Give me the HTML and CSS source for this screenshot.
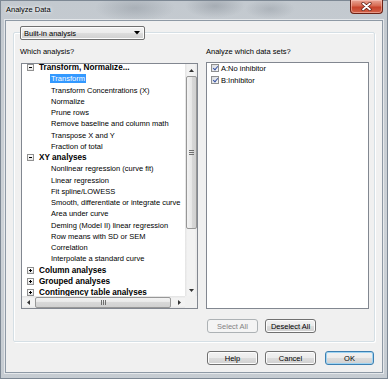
FILE: index.html
```html
<!DOCTYPE html>
<html lang="en">
<head>
  <meta charset="UTF-8">
  <title>Analyze Data</title>
  <link rel="stylesheet" href="styles.css">
</head>
<body>

  <div class="window">
    <div class="titlebar">
      <div class="title">Analyze Data</div>
      <div class="close">
        <svg width="11" height="9" viewBox="0 0 11 9">
          <path d="M2 1.5 L9 7.5 M9 1.5 L2 7.5" stroke="#5a1a10" stroke-width="3.2" stroke-linecap="round"/>
          <path d="M2 1.5 L9 7.5 M9 1.5 L2 7.5" stroke="#fff" stroke-width="1.8" stroke-linecap="round"/>
        </svg>
      </div>
    </div>

    <div class="client">
      <div class="combo">
        <span>Built-in analysis</span>
        <svg width="6" height="4" viewBox="0 0 6 4"><path d="M0 0 H6 L3 3.5 Z" fill="#000"/></svg>
      </div>

      <div class="group">
        <div class="label first">Which analysis?</div>
        <div class="label">Analyze which data sets?</div>

        <div class="tree">
          <div class="tree-rows">
            <div class="node"><span class="exp minus"></span>Transform, Normalize...</div>
            <div class="leaf"><span class="selected">Transform</span></div>
            <div class="leaf">Transform Concentrations (X)</div>
            <div class="leaf">Normalize</div>
            <div class="leaf">Prune rows</div>
            <div class="leaf">Remove baseline and column math</div>
            <div class="leaf">Transpose X and Y</div>
            <div class="leaf">Fraction of total</div>
            <div class="node"><span class="exp minus"></span>XY analyses</div>
            <div class="leaf">Nonlinear regression (curve fit)</div>
            <div class="leaf">Linear regression</div>
            <div class="leaf">Fit spline/LOWESS</div>
            <div class="leaf">Smooth, differentiate or integrate curve</div>
            <div class="leaf">Area under curve</div>
            <div class="leaf">Deming (Model II) linear regression</div>
            <div class="leaf">Row means with SD or SEM</div>
            <div class="leaf">Correlation</div>
            <div class="leaf">Interpolate a standard curve</div>
            <div class="node"><span class="exp plus"></span>Column analyses</div>
            <div class="node"><span class="exp plus"></span>Grouped analyses</div>
            <div class="node"><span class="exp plus"></span>Contingency table analyses</div>
          </div>

          <div class="vbar">
            <div class="arrow"><svg width="5" height="3" viewBox="0 0 5 3"><path d="M0 3 H5 L2.5 0 Z" fill="#333"/></svg></div>
            <div class="track">
              <div class="vthumb"><span class="grip-h"></span></div>
            </div>
            <div class="arrow"><svg width="5" height="3" viewBox="0 0 5 3"><path d="M0 0 H5 L2.5 3 Z" fill="#333"/></svg></div>
          </div>

          <div class="hbar">
            <div class="arrow"><svg width="3" height="5" viewBox="0 0 3 5"><path d="M3 0 V5 L0 2.5 Z" fill="#333"/></svg></div>
            <div class="track">
              <div class="hthumb"><span class="grip-v"></span></div>
            </div>
            <div class="arrow"><svg width="3" height="5" viewBox="0 0 3 5"><path d="M0 0 V5 L3 2.5 Z" fill="#333"/></svg></div>
          </div>

          <div class="corner"></div>
        </div>

        <div class="checks-box">
          <div class="checks">
            <div class="check"><span class="box"></span>A:No inhibitor</div>
            <div class="check"><span class="box"></span>B:Inhibitor</div>
          </div>
        </div>

        <div class="select-row">
          <button class="btn disabled">Select All</button>
          <button class="btn">Deselect All</button>
        </div>
      </div>

      <div class="footer">
        <button class="btn">Help</button>
        <button class="btn">Cancel</button>
        <button class="btn default">OK</button>
      </div>
    </div>
  </div>

</body>
</html>
```

FILE: styles.css
```css
* {
  box-sizing: border-box;
}

body {
  margin: 0;
  font-family: "Liberation Sans", Arial, sans-serif;
  font-size: 7.5px;
  color: #000;
  overflow: hidden;
}

/* ===== window frame ===== */
.window {
  width: 388px;
  height: 379px;
  display: flex;
  flex-direction: column;
  background:
    radial-gradient(ellipse 40px 14px at 135px 8px, rgba(120, 128, 138, 0.35), transparent),
    radial-gradient(ellipse 30px 12px at 215px 6px, rgba(110, 118, 128, 0.35), transparent),
    radial-gradient(ellipse 25px 10px at 270px 9px, rgba(120, 128, 138, 0.3), transparent),
    linear-gradient(to bottom, #c3c9cf, #cdd2d7 60%, #c6ccd2);
  box-shadow: inset 0 0 0 1px #7d8894;
}

.titlebar {
  height: 20px;
  display: flex;
  justify-content: space-between;
  align-items: flex-start;
}

.title {
  padding-left: 6px;
  line-height: 20px;
  text-shadow: 0 0 5px #fff, 0 0 3px #fff;
}

.close {
  width: 33px;
  height: 14px;
  margin-right: 5px;
  display: flex;
  align-items: center;
  justify-content: center;
  border: 1px solid #6b2216;
  border-top: none;
  border-radius: 0 0 4px 4px;
  background: linear-gradient(to bottom, #e9a696, #d76a52 45%, #c7432b 55%, #d2634a);
  box-shadow: inset 0 0 0 1px rgba(255, 210, 200, 0.5);
}

.client {
  flex: 1;
  margin: 0 5px 6px;
  background: #f0f0f0;
  border: 1px solid #8e99a5;
  box-shadow: 0 0 0 1px rgba(255, 255, 255, 0.55);
  display: flex;
  flex-direction: column;
}

/* ===== combo + group box ===== */
.combo {
  position: relative;
  z-index: 1;
  width: 125px;
  height: 14px;
  margin: 5px 0 0 14px;
  padding: 0 4px 0 3px;
  display: flex;
  align-items: center;
  justify-content: space-between;
  border: 1px solid #707070;
  border-radius: 2px;
  background: linear-gradient(#f2f2f2, #ebebeb 50%, #dddddd 50%, #cfcfcf);
  box-shadow: inset 0 0 0 1px #fcfcfc;
}

.group {
  margin: -8px 7px 0;
  padding: 13px 5px 8px 7px;
  border: 1px solid #d5dfe5;
  border-radius: 2px;
  box-shadow: inset 1px 1px 0 #fff, 1px 1px 0 #fff;
  display: grid;
  grid-template-columns: 177px 163px;
  column-gap: 8px;
}

.label {
  height: 12px;
  line-height: 12px;
  margin-bottom: 4px;
  white-space: nowrap;
}

.label.first {
  margin-left: -1px;
}

/* ===== tree ===== */
.tree {
  height: 246px;
  margin-top: 1px;
  border: 1px solid #828790;
  background: #fff;
  display: grid;
  grid-template-columns: 163px 12px;
  grid-template-rows: 232px 12px;
}

.tree-rows {
  overflow: hidden;
  white-space: nowrap;
}

.tree-rows > div:first-child {
  margin-top: -2px;
}

.node, .leaf {
  height: 11.25px;
  display: flex;
  align-items: center;
}

.node {
  padding-left: 5px;
  gap: 5px;
  font-weight: bold;
  font-size: 8.2px;
}

.leaf {
  padding-left: 28px;
}

.leaf > span,
.leaf {
  line-height: 9px;
}

.leaf {
  text-indent: 1px;
}

.selected {
  background: #3399ff;
  color: #fff;
  padding: 0 1px 0 0;
}

.exp {
  position: relative;
  width: 7px;
  height: 7px;
  flex: none;
  border: 1px solid #919191;
  background: linear-gradient(#fff, #e4e4e4);
}

.exp::before {
  content: "";
  position: absolute;
  left: 1px;
  top: 2px;
  width: 3px;
  height: 1px;
  background: #000;
}

.exp.plus::after {
  content: "";
  position: absolute;
  left: 2px;
  top: 1px;
  width: 1px;
  height: 3px;
  background: #000;
}

/* ===== scrollbars ===== */
.vbar {
  display: flex;
  flex-direction: column;
  background: linear-gradient(to right, #e3e3e3, #f2f2f2 20%, #f2f2f2 80%, #e6e6e6);
}

.vbar .arrow {
  height: 12px;
  display: flex;
  align-items: center;
  justify-content: center;
}

.vbar .track {
  flex: 1;
}

.vthumb {
  width: 11px;
  height: 153px;
  margin-left: 1px;
  display: flex;
  align-items: center;
  justify-content: center;
  border: 1px solid #979797;
  border-radius: 2px;
  background: linear-gradient(to right, #f3f3f3, #e7e7e7 50%, #d8d8d8 50%, #d0d0d0);
}

.hbar {
  display: flex;
  background: linear-gradient(to bottom, #e3e3e3, #f2f2f2 20%, #f2f2f2 80%, #e6e6e6);
}

.hbar .arrow {
  width: 12px;
  display: flex;
  align-items: center;
  justify-content: center;
}

.hbar .track {
  flex: 1;
}

.hthumb {
  width: 136px;
  height: 11px;
  margin: 1px 0 0 1px;
  display: flex;
  align-items: center;
  justify-content: center;
  border: 1px solid #979797;
  border-radius: 2px;
  background: linear-gradient(to bottom, #f3f3f3, #e7e7e7 50%, #d8d8d8 50%, #d0d0d0);
}

.grip-h {
  width: 5px;
  height: 5px;
  background: repeating-linear-gradient(to bottom, #6f6f6f 0 1px, transparent 1px 2px);
}

.grip-v {
  width: 5px;
  height: 5px;
  background: repeating-linear-gradient(to right, #6f6f6f 0 1px, transparent 1px 2px);
}

.corner {
  background: #f0f0f0;
}

/* ===== data sets ===== */
.checks-box {
  height: 247px;
  border: 1px solid #828790;
  background: #fff;
  padding-left: 4px;
}

.checks {
  margin-top: -1px;
}

.check {
  height: 12px;
  display: flex;
  align-items: center;
  gap: 2px;
  white-space: nowrap;
}

.box {
  position: relative;
  width: 8px;
  height: 8px;
  flex: none;
  border: 1px solid #8e8f8f;
  background: linear-gradient(135deg, #d8dbe0, #f6f6f6);
}

.box::after {
  content: "";
  position: absolute;
  left: 2px;
  top: 0;
  width: 2px;
  height: 4px;
  border-right: 1.3px solid #3a55a3;
  border-bottom: 1.3px solid #3a55a3;
  transform: rotate(40deg);
}

/* ===== buttons ===== */
.select-row {
  grid-column: 2;
  display: flex;
  gap: 7px;
  margin-top: 10px;
  padding-left: 1px;
}

.btn {
  width: 51px;
  height: 14px;
  padding: 0;
  font: inherit;
  color: #000;
  display: flex;
  align-items: center;
  justify-content: center;
  border: 1px solid #707070;
  border-radius: 3px;
  background: linear-gradient(#f2f2f2, #ebebeb 50%, #dddddd 50%, #cfcfcf);
  box-shadow: inset 0 0 0 1px #fcfcfc;
}

.btn.disabled {
  color: #838383;
  border-color: #adb2b5;
  background: #f4f4f4;
  box-shadow: none;
}

.btn.default {
  width: 49px;
  margin-left: 2px;
  border-color: #3c7fb1;
  box-shadow: inset 0 0 0 1px #9fd4f3;
}

.footer {
  display: flex;
  justify-content: flex-end;
  gap: 7px;
  margin-top: 9px;
  padding-right: 8px;
}
```
